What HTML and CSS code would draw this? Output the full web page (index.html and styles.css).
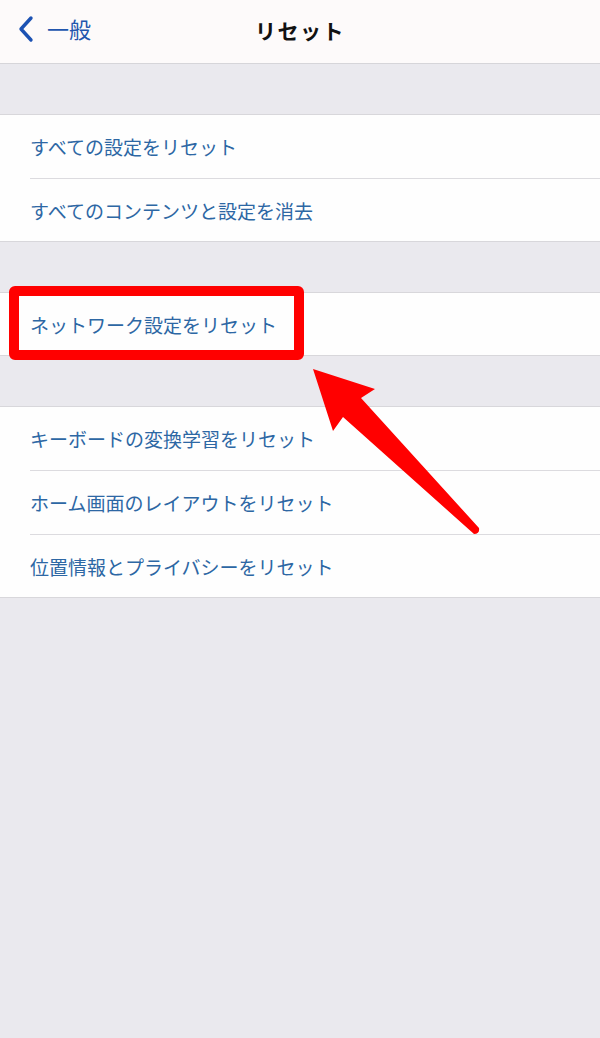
FILE: index.html
```html
<!DOCTYPE html>
<html lang="ja">

<head>
    <meta charset="UTF-8">
    <meta name="viewport" content="width=device-width, initial-scale=1.0">
    <title>リセット</title>
    <link rel="stylesheet" href="styles.css">
</head>

<body>
    <div class="screen">
        <div class="navbar">
            <a class="back" href="#">
                <svg class="chevron" width="16" height="28" viewBox="0 0 16 28">
                    <path d="M13 3 L3 14 L13 25" fill="none" stroke="#1c52b3" stroke-width="3.4" stroke-linecap="round" stroke-linejoin="round" />
                </svg>
                <span>一般</span>
            </a>
            <div class="title">リセット</div>
        </div>

        <div class="group">
            <div class="row">すべての設定をリセット</div>
            <div class="row">すべてのコンテンツと設定を消去</div>
        </div>

        <div class="group">
            <div class="row">ネットワーク設定をリセット</div>
        </div>

        <div class="group">
            <div class="row">キーボードの変換学習をリセット</div>
            <div class="row">ホーム画面のレイアウトをリセット</div>
            <div class="row">位置情報とプライバシーをリセット</div>
        </div>

        <!-- annotation -->
        <div class="highlight"></div>
        <svg class="arrow" width="600" height="1038" viewBox="0 0 600 1038">
            <path d="M313 369 L375 389 L361 398 L479 528 Q480 534 474 534 L343 417 L333 431 Z" fill="#ff0000" />
        </svg>
    </div>
</body>

</html>
```

FILE: styles.css
```css
body {
    margin: 0;
    background: #eae9ee;
    font-family: "Noto Sans CJK JP", "Noto Sans", sans-serif;
}

.screen {
    position: relative;
    width: 600px;
    height: 1038px;
    overflow: hidden;
}

.navbar {
    height: 64px;
    box-sizing: border-box;
    padding-bottom: 4px;
    background: #fdfafa;
    border-bottom: 1px solid #d6d5d9;
    display: flex;
    align-items: center;
    justify-content: center;
    position: relative;
}

.back {
    position: absolute;
    left: 18px;
    top: 15px;
    display: flex;
    align-items: center;
    gap: 13px;
    color: #2256ad;
    text-decoration: none;
    font-size: 22px;
}

.back span {
    line-height: 30px;
    margin-top: -2px;
}

.title {
    font-size: 21px;
    font-weight: bold;
    letter-spacing: 1.5px;
    color: #111;
}

.group {
    margin-top: 50px;
    background: #fefefe;
    border-top: 1px solid #d8d7db;
    border-bottom: 1px solid #d8d7db;
}

.row {
    height: 63px;
    margin-left: 30px;
    display: flex;
    align-items: center;
    font-size: 19px;
    color: #2d67a4;
    border-bottom: 1px solid #dcdbdf;
}

.row:last-child {
    border-bottom: none;
    height: 62px;
}

.highlight {
    position: absolute;
    left: 9px;
    top: 286px;
    width: 275px;
    height: 54px;
    border: 10px solid #ff0000;
    border-radius: 6px;
}

.arrow {
    position: absolute;
    left: 0;
    top: 0;
}
```
